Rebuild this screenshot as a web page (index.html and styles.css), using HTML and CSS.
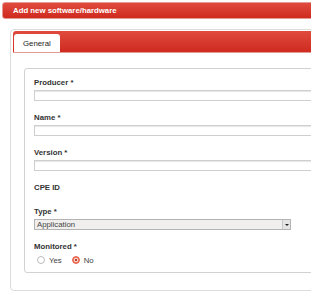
FILE: index.html
```html
<!DOCTYPE html>
<html lang="en">
<head>
  <meta charset="UTF-8" />
  <title>Add new software/hardware</title>
  <link rel="stylesheet" href="styles.css">
</head>
<body>
  <div class="title-bar">Add new software/hardware</div>

  <div class="panel">
    <div class="tab-bar">
      <div class="tab">General</div>
    </div>

    <div class="tab-content">
      <div class="fieldset">
        <div class="field">
          <label>Producer *</label>
          <input type="text" class="text-input" />
        </div>
        <div class="field">
          <label>Name *</label>
          <input type="text" class="text-input" />
        </div>
        <div class="field">
          <label>Version *</label>
          <input type="text" class="text-input" />
        </div>
        <div class="field">
          <label>CPE ID</label>
        </div>
        <div class="field">
          <label>Type *</label>
          <div class="select">
            <span class="select-value">Application</span>
            <span class="select-arrow"></span>
          </div>
        </div>
        <div class="field last">
          <label>Monitored *</label>
          <div class="radios">
            <span class="radio"></span><span class="radio-label">Yes</span>
            <span class="radio checked"></span><span class="radio-label">No</span>
          </div>
        </div>
      </div>
    </div>
  </div>
</body>
</html>
```

FILE: styles.css
```css
html, body {
  overflow: hidden;
}

body {
  margin: 0;
  font-family: "Liberation Sans", Arial, sans-serif;
  font-size: 7.8px;
  color: #333;
  background: #fff;
  width: 311px;
  height: 296px;
}

.title-bar {
  margin: 2px 0 0 2px;
  width: 330px;
  height: 17px;
  box-sizing: border-box;
  padding-left: 10px;
  line-height: 15px;
  font-weight: bold;
  color: #fff;
  background: linear-gradient(#e04b3e, #cf2a1f);
  border: 1px solid #e39a93;
  border-radius: 3px 0 0 3px;
}

.panel {
  margin: 10px 0 0 10px;
  width: 340px;
  height: 262px;
  box-sizing: border-box;
  padding: 1px 2px;
  border: 1px solid #dcdcdc;
  border-radius: 4px;
}

.tab-bar {
  height: 22px;
  box-sizing: border-box;
  padding: 3px 0 0 1px;
  background: linear-gradient(#e04b3e, #cf2a1f);
  border-bottom: 1px solid #e39a93;
  border-radius: 3px 0 0 0;
  display: flex;
  align-items: flex-end;
}

.tab {
  width: 46px;
  height: 18px;
  box-sizing: border-box;
  padding-left: 9px;
  line-height: 19px;
  color: #222;
  background: #fff;
  border-radius: 3px 3px 0 0;
}

.tab-content {
  padding: 15px 0 0 11px;
}

.fieldset {
  width: 320px;
  height: 205px;
  box-sizing: border-box;
  padding: 9px 0 0 9px;
  border: 1px solid #d2d2d2;
  border-radius: 3px;
}

.field {
  display: flex;
  flex-direction: column;
  margin-bottom: 12px;
}

.field label {
  display: block;
  height: 10px;
  line-height: 10px;
  margin-bottom: 2px;
  font-weight: bold;
  color: #333;
}

.field.last {
  margin-bottom: 0;
}

.text-input {
  display: block;
  width: 300px;
  height: 11px;
  box-sizing: border-box;
  margin: 0;
  padding: 0;
  border: 1px solid #cfcfcf;
  box-shadow: inset 0 1px 1px #e6e6e6;
  background: #fff;
}

.select {
  display: flex;
  align-items: center;
  width: 257px;
  height: 11px;
  box-sizing: border-box;
  border: 1px solid #b4b4b4;
  background: #f0efee;
}

.select-value {
  flex: 1;
  padding-left: 2px;
  line-height: 9px;
  color: #444;
}

.select-arrow {
  width: 8px;
  height: 9px;
  box-sizing: border-box;
  border-left: 1px solid #c8c8c8;
  background: #e4e4e4;
  position: relative;
}

.select-arrow::after {
  content: "";
  position: absolute;
  left: 2px;
  top: 4px;
  border-left: 2px solid transparent;
  border-right: 2px solid transparent;
  border-top: 2px solid #222;
}

.radios {
  display: flex;
  align-items: center;
  height: 12px;
  padding-left: 3px;
}

.radio {
  width: 8px;
  height: 8px;
  box-sizing: border-box;
  border: 1px solid #bcbcbc;
  border-radius: 50%;
  background: #fff;
}

.radio.checked {
  border: 1px solid #e2604a;
  background: radial-gradient(circle, #c0392b 0 1.5px, #fff 1.6px 2px, #ef7a5f 2.2px);
}

.radio-label {
  margin: 0 10px 0 4px;
  color: #444;
}
```
